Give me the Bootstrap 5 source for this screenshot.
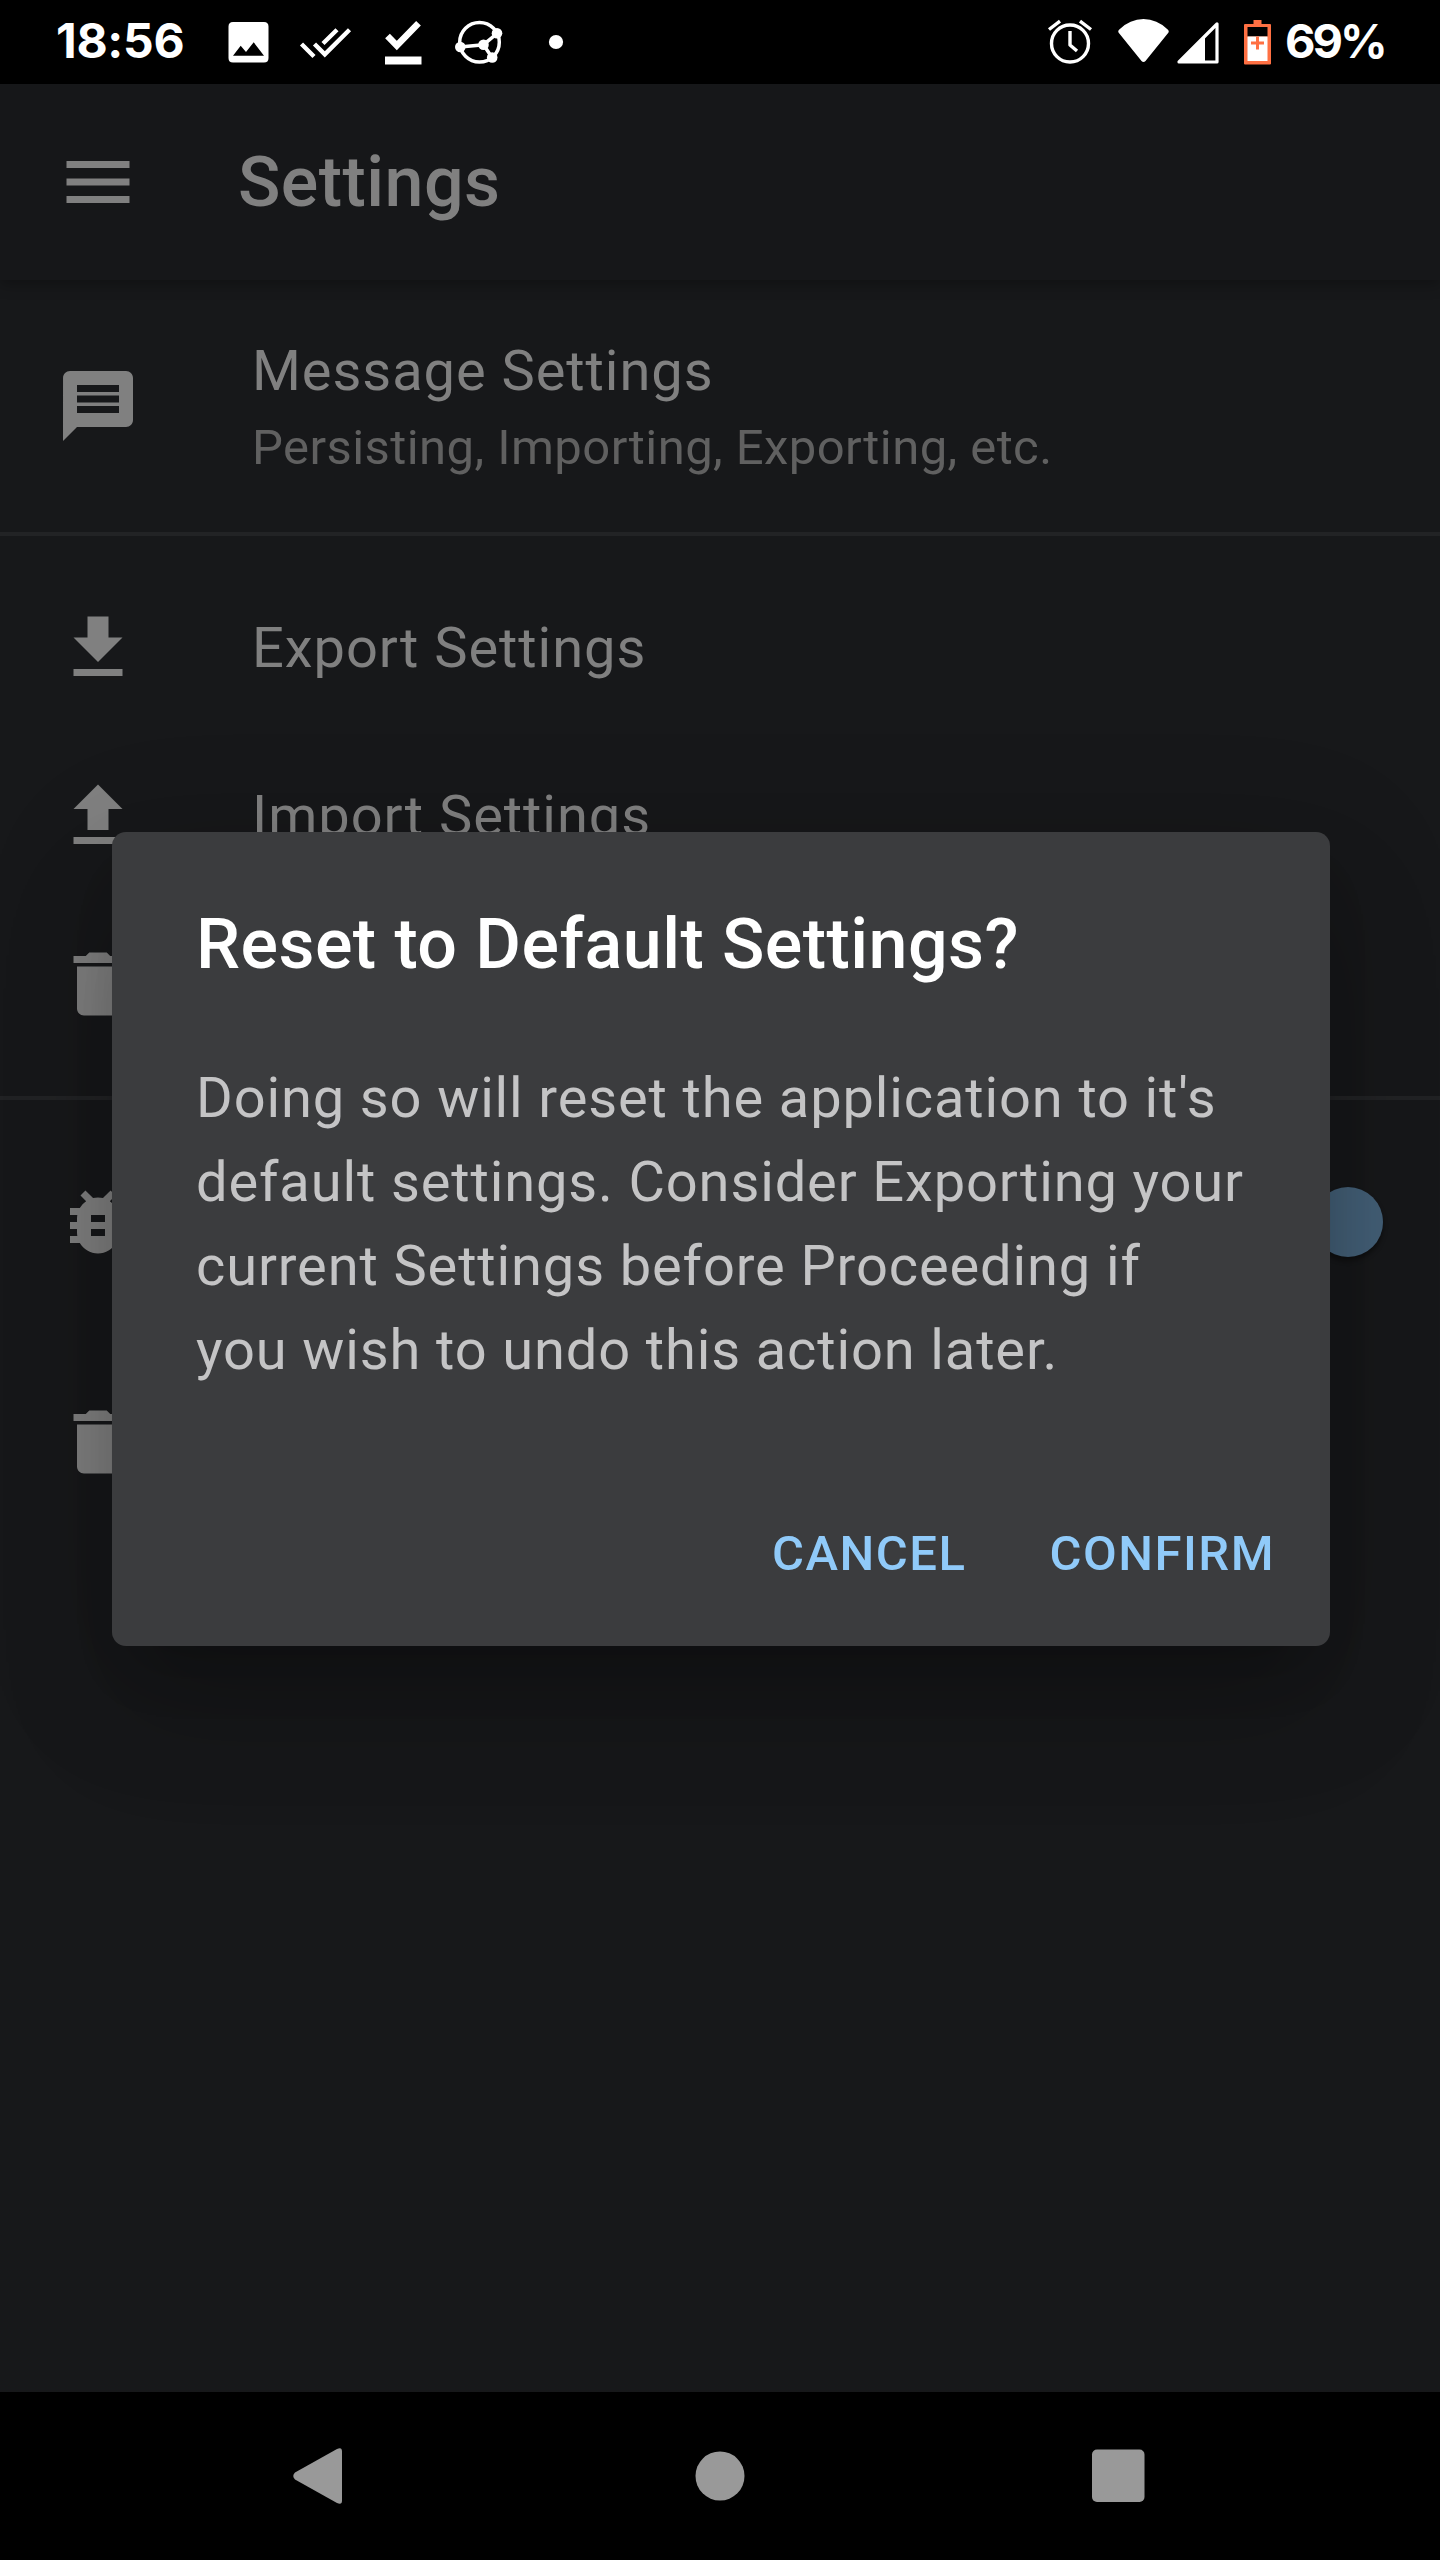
<!DOCTYPE html>
<html lang="en">
<head>
<meta charset="utf-8">
<meta name="viewport" content="width=device-width, initial-scale=1">
<title>Settings</title>
<link href="https://cdn.jsdelivr.net/npm/bootstrap@5.3.0/dist/css/bootstrap.min.css" rel="stylesheet">
<style>
  body { font-family: Roboto, "Liberation Sans", sans-serif; background: #000; color: #808080; }
  .phone { width: 1440px; height: 2560px; background: #17181a; }
  .status { height: 84px; background: #000; color: #fff; font-family: Inter, "Open Sans", sans-serif; font-size: 48px; font-weight: 700; line-height: 82px; }
  .status svg { flex: none; }
  .clock { width: 212px; padding-left: 56px; letter-spacing: -.3px; }
  .charge { width: 160px; padding-left: 5px; font-size: 47px; letter-spacing: -3px; }
  .appbar { height: 196px; padding: 0 56px; background: #161719; box-shadow: 0 4px 14px rgba(0,0,0,.3); z-index: 1; }
  .appbar h1 { margin: 0 0 0 98px; font-size: 70px; font-weight: 500; line-height: 84px; letter-spacing: .44px; }
  .ico { width: 84px; height: 84px; fill: #808080; flex: none; }
  .item { height: 168px; padding: 0 56px; gap: 112px; }
  .item-tall { height: 252px; }
  .item-switch { height: 244px; padding-right: 57px; }
  .item-last { margin-top: 14px; }
  .item-title { font-size: 56px; line-height: 84px; letter-spacing: .95px; }
  .item-sub { font-size: 49px; line-height: 69px; color: #606060; letter-spacing: .43px; }
  .item-text { padding-bottom: 2px; }
  .group { border-top: 4px solid #222325; }
  .group-files { padding: 28px 0; height: 564px; }
  .knob { width: 70px; height: 70px; background: #446078; box-shadow: 0 4px 5px rgba(0,0,0,.4); }
  .track { width: 119px; height: 49px; border-radius: 25px; background: #2b3b48; }
  .navkeys { height: 168px; background: #000; }
  .dialog-box { left: 112px; top: 832px; width: 1218px; height: 814px; border-radius: 14px; background: #3b3c3e; padding: 70px 31px 29px 84px; z-index: 5;
    box-shadow: 0 38px 56px -24px rgba(0,0,0,.2), 0 70px 120px 0 rgba(0,0,0,.14), 0 31px 130px 14px rgba(0,0,0,.12); }
  .dialog-box h2 { font-size: 70px; font-weight: 500; line-height: 84px; color: #fff; margin: 0 0 70px; letter-spacing: .44px; }
  .dialog-box p { font-size: 56px; line-height: 84px; color: #c4c4c5; letter-spacing: .875px; white-space: nowrap; }
  .actions { gap: 35px; }
  .act { height: 126px; border: 0; font-size: 49px; font-weight: 500; letter-spacing: 1.5px; color: #90caf9; line-height: 126px; }
</style>
</head>
<body>
<div class="phone d-flex flex-column position-relative overflow-hidden mx-auto">
  <header class="status d-flex">
    <div class="clock">18:56</div>
    <svg width="78" height="84" viewBox="212 0 78 84" fill="#fff"><path fill-rule="evenodd" d="M233 22h31q4.500 0 4.500 4.500v31.500q0 4.500-4.500 4.500h-31q-4.500 0-4.500-4.500v-31.500q0-4.500 4.500-4.500zM233 55.700h31l-10.300-13.400-7.700 9.700-5.300-6.300z"/></svg>
    <svg width="80" height="84" viewBox="290 0 80 84" fill="none" stroke="#fff" stroke-width="4.400"><path d="M301.500 44l12.500 12.500M314.500 44l10.300 10.300L349.500 29.800M337 29.800l-14 13.700"/></svg>
    <svg width="74" height="84" viewBox="370 0 74 84"><path d="M387.500 36l9.300 9.500L418.500 23.200" fill="none" stroke="#fff" stroke-width="6.600"/><path d="M385 56.500h36.500v8H385z" fill="#fff"/></svg>
    <svg width="80" height="84" viewBox="444 0 80 84" fill="none" stroke="#fff" stroke-width="3.500"><circle cx="479.500" cy="42.300" r="19.800"/><path d="M460 47l23.500-2.300L497 33.500M483.500 44.700l8.500 12.800"/><g fill="#fff" stroke="none"><circle cx="460.300" cy="47" r="5.300"/><circle cx="483.500" cy="44.700" r="5.300"/><circle cx="497" cy="33.300" r="5.300"/><circle cx="492.200" cy="57.500" r="5.300"/></g></svg>
    <svg width="64" height="84" viewBox="524 0 64 84"><circle cx="556" cy="42" r="7.100" fill="#fff"/></svg>
    <svg class="ms-auto" width="70" height="84" viewBox="1035 0 70 84" fill="none" stroke="#fff" stroke-width="3.400"><circle cx="1070" cy="43.500" r="18.500"/><path d="M1070 31v14l7 6" stroke-linejoin="round"/><path d="M1049 29.500l11-8.300M1091 29.500l-11-8.300"/></svg>
    <svg width="68" height="84" viewBox="1105 0 68 84" fill="#fff"><path d="M1118.500 32.500q-1-1.500.8-3Q1130 19 1143.500 19t24.200 10.500q1.800 1.500.8 3L1145.500 61q-2 2-4 0z"/></svg>
    <svg width="57" height="84" viewBox="1173 0 57 84"><path d="M1179 62L1217 24v38z" fill="none" stroke="#fff" stroke-width="3.200" stroke-linejoin="round"/><path d="M1178.500 63L1205 36v27z" fill="#fff"/></svg>
    <svg width="50" height="84" viewBox="1230 0 50 84"><path d="M1253.500 20h8v4h8.500q1 0 1 1v38.500q0 1-1 1h-25q-1 0-1-1V25q0-1 1-1h8.500z" fill="#ff7043"/><path d="M1247.500 27h20v9.500h-20z" fill="#000"/><path d="M1247.500 36.500h20V61h-20z" fill="#fff"/><path d="M1251 43h13M1257.500 36.500v13" stroke="#ff7043" stroke-width="3"/></svg>
    <div class="charge">69%</div>
  </header>
  <nav class="appbar d-flex align-items-center position-relative">
    <svg class="ico" viewBox="0 0 24 24"><path d="M3 18h18v-2H3v2zm0-5h18v-2H3v2zm0-7v2h18V6H3z"/></svg>
    <h1>Settings</h1>
  </nav>
  <main class="flex-grow-1">
    <div class="item item-tall d-flex align-items-center">
      <svg class="ico" viewBox="0 0 24 24"><path d="M20 2H4c-1.100 0-1.990.9-1.990 2L2 22l4-4h14c1.100 0 2-.9 2-2V4c0-1.100-.9-2-2-2zm-2 12H6v-2h12v2zm0-3H6V9h12v2zm0-3H6V6h12v2z"/></svg>
      <div class="item-text"><div class="item-title">Message Settings</div><div class="item-sub">Persisting, Importing, Exporting, etc.</div></div>
    </div>
    <section class="group group-files">
      <div class="item d-flex align-items-center">
        <svg class="ico" viewBox="0 0 24 24"><path d="M19 9h-4V3H9v6H5l7 7 7-7zM5 18v2h14v-2H5z"/></svg>
        <div class="item-title">Export Settings</div>
      </div>
      <div class="item d-flex align-items-center">
        <svg class="ico" viewBox="0 0 24 24"><path d="M9 16h6v-6h4l-7-7-7 7h4zm-4 2h14v2H5z"/></svg>
        <div class="item-title">Import Settings</div>
      </div>
      <div class="item d-flex align-items-center">
        <svg class="ico" viewBox="0 0 24 24"><path d="M6 19c0 1.100.9 2 2 2h8c1.100 0 2-.9 2-2V7H6v12zM19 4h-3.500l-1-1h-5l-1 1H5v2h14V4z"/></svg>
      </div>
    </section>
    <section class="group">
      <div class="item item-switch d-flex align-items-center justify-content-between">
        <svg class="ico" viewBox="0 0 24 24"><path d="M20 8h-2.810c-.45-.78-1.070-1.450-1.820-1.960L17 4.410 15.590 3l-2.170 2.170C12.960 5.060 12.490 5 12 5c-.49 0-.96.06-1.410.17L8.410 3 7 4.410l1.620 1.630C7.880 6.550 7.260 7.220 6.810 8H4v2h2.090c-.05.33-.09.66-.09 1v1H4v2h2v1c0 .34.04.67.09 1H4v2h2.810c1.040 1.790 2.970 3 5.190 3s4.150-1.210 5.190-3H20v-2h-2.090c.05-.33.09-.66.09-1v-1h2v-2h-2v-1c0-.34-.04-.67-.09-1H20V8zm-6 8h-4v-2h4v2zm0-4h-4v-2h4v2z"/></svg>
        <div class="track d-flex align-items-center justify-content-end"><div class="knob rounded-circle flex-shrink-0"></div></div>
      </div>
      <div class="item item-last d-flex align-items-center">
        <svg class="ico" viewBox="0 0 24 24"><path d="M6 19c0 1.100.9 2 2 2h8c1.100 0 2-.9 2-2V7H6v12zM19 4h-3.500l-1-1h-5l-1 1H5v2h14V4z"/></svg>
      </div>
    </section>
  </main>
  <div class="dialog-box position-absolute d-flex flex-column" role="dialog">
    <h2>Reset to Default Settings?</h2>
    <p class="m-0">Doing so will reset the application to it's<br>default settings. Consider Exporting your<br>current Settings before Proceeding if<br>you wish to undo this action later.</p>
    <div class="actions d-flex justify-content-end mt-auto"><button class="act btn p-0 px-4">CANCEL</button><button class="act btn p-0 px-4">CONFIRM</button></div>
  </div>
  <footer class="navkeys">
    <svg width="1440" height="168" viewBox="0 2392 1440 168" fill="#999"><path d="M295 2472.500L337 2449q5-2.500 5 2.500v49q0 5-5 2.500L295 2479.500q-3.500-3.500 0-7z"/><circle cx="720" cy="2476" r="24.500"/><rect x="1092" y="2449.500" width="52.500" height="52.500" rx="5"/></svg>
  </footer>
</div>
<script src="https://cdn.jsdelivr.net/npm/bootstrap@5.3.0/dist/js/bootstrap.bundle.min.js"></script>
</body>
</html>
